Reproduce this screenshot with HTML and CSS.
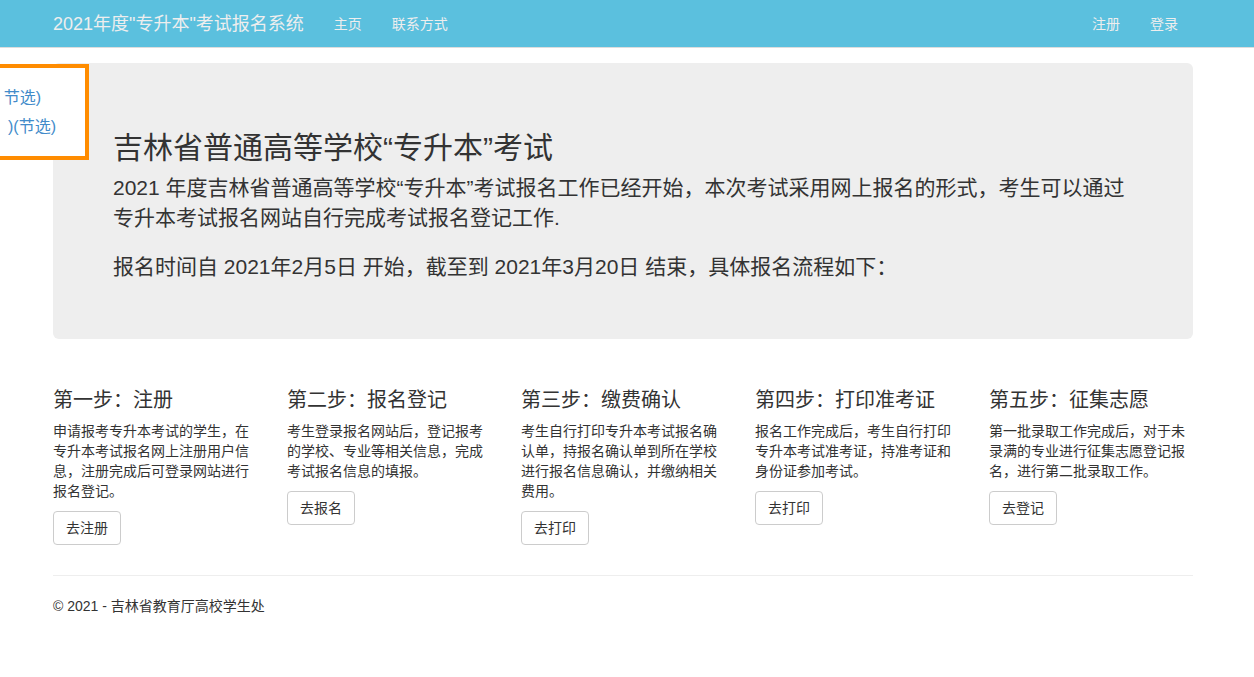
FILE: index.html
```html
<!DOCTYPE html>
<html lang="zh-CN">
<head>
<meta charset="utf-8">
<title>2021年度"专升本"考试报名系统</title>
<link rel="stylesheet" href="styles.css">
</head>
<body>
<nav class="navbar">
  <div class="container nav-inner">
    <a class="brand" href="#">2021年度"专升本"考试报名系统</a>
    <ul class="nav">
      <li><a href="#">主页</a></li>
      <li><a href="#">联系方式</a></li>
    </ul>
    <ul class="nav nav-right">
      <li><a href="#">注册</a></li>
      <li><a href="#">登录</a></li>
    </ul>
  </div>
</nav>

<div class="float-box">
  <div class="float-line line1"><a href="#">节选)</a></div>
  <div class="float-line line2"><a href="#">)(节选)</a></div>
</div>

<div class="container">
  <div class="jumbotron">
    <h1>吉林省普通高等学校“专升本”考试</h1>
    <p>2021 年度吉林省普通高等学校“专升本”考试报名工作已经开始，本次考试采用网上报名的形式，考生可以通过专升本考试报名网站自行完成考试报名登记工作.</p>
    <p>报名时间自 2021年2月5日 开始，截至到 2021年3月20日 结束，具体报名流程如下：</p>
  </div>

  <div class="steps">
    <div class="step">
      <h3>第一步：注册</h3>
      <p>申请报考专升本考试的学生，在专升本考试报名网上注册用户信息，注册完成后可登录网站进行报名登记。</p>
      <p><a class="btn" href="#">去注册</a></p>
    </div>
    <div class="step">
      <h3>第二步：报名登记</h3>
      <p>考生登录报名网站后，登记报考的学校、专业等相关信息，完成考试报名信息的填报。</p>
      <p><a class="btn" href="#">去报名</a></p>
    </div>
    <div class="step">
      <h3>第三步：缴费确认</h3>
      <p>考生自行打印专升本考试报名确认单，持报名确认单到所在学校进行报名信息确认，并缴纳相关费用。</p>
      <p><a class="btn" href="#">去打印</a></p>
    </div>
    <div class="step">
      <h3>第四步：打印准考证</h3>
      <p>报名工作完成后，考生自行打印专升本考试准考证，持准考证和身份证参加考试。</p>
      <p><a class="btn" href="#">去打印</a></p>
    </div>
    <div class="step">
      <h3>第五步：征集志愿</h3>
      <p>第一批录取工作完成后，对于未录满的专业进行征集志愿登记报名，进行第二批录取工作。</p>
      <p><a class="btn" href="#">去登记</a></p>
    </div>
  </div>

  <hr class="divider">
  <footer class="footer">
    <p>© 2021 - 吉林省教育厅高校学生处</p>
  </footer>
</div>
</body>
</html>
```

FILE: styles.css
```css
* { box-sizing: border-box; }

html, body {
  margin: 0;
  padding: 0;
}

body {
  font-family: "Liberation Sans", "Noto Sans CJK SC", sans-serif;
  font-size: 14px;
  line-height: 20px;
  color: #333;
  background: #fff;
}

a { text-decoration: none; }

.container {
  width: 1140px;
  margin: 0 0 0 53px;
}

/* navbar */
.navbar {
  background: #5bc0de;
  height: 48px;
  border-bottom: 1px solid #ddd;
}

.nav-inner {
  display: flex;
  align-items: center;
  height: 47px;
}

.brand {
  color: #eee;
  font-size: 18px;
  line-height: 20px;
  padding-right: 15px;
}

.nav {
  list-style: none;
  margin: 0;
  padding: 0;
  display: flex;
}

.nav a {
  display: block;
  color: #eee;
  font-size: 14px;
  line-height: 20px;
  padding: 0 15px;
}

.nav-right {
  margin-left: auto;
}

/* floating orange box */
.float-box {
  position: absolute;
  left: 0;
  top: 64px;
  width: 89px;
  height: 96px;
  background: #fff;
  border: 4px solid #ff8c00;
  border-left: none;
  padding: 15px 0 14px;
  overflow: hidden;
  z-index: 10;
}

.float-line {
  display: flex;
  justify-content: flex-end;
  white-space: nowrap;
  font-size: 16px;
  line-height: 29px;
}

.float-line a { color: #428bca; }

.line1 { padding-right: 44px; }
.line2 { padding-right: 29px; }

/* jumbotron */
.jumbotron {
  margin-top: 15px;
  background: #eee;
  border-radius: 6px;
  padding: 48px 60px 38px;
  margin-bottom: 30px;
}

.jumbotron h1 {
  font-size: 30px;
  line-height: 33px;
  font-weight: 400;
  margin: 20px 0 9px;
}

.jumbotron p {
  font-size: 21px;
  line-height: 30px;
  margin: 0 0 19px;
}

/* steps */
.steps {
  display: grid;
  grid-template-columns: repeat(5, 204px);
  column-gap: 30px;
  align-items: start;
}

.step h3 {
  font-size: 20px;
  line-height: 22px;
  font-weight: 400;
  margin: 20px 0 10px;
}

.step p {
  margin: 0 0 10px;
}

.btn {
  display: inline-block;
  padding: 6px 12px;
  font-size: 14px;
  line-height: 20px;
  color: #333;
  background: #fff;
  border: 1px solid #ccc;
  border-radius: 4px;
}

.divider {
  margin: 20px 0;
  border: 0;
  border-top: 1px solid #eee;
}

.footer p {
  margin: 0 0 10px;
  font-size: 14px;
  line-height: 20px;
}
```
